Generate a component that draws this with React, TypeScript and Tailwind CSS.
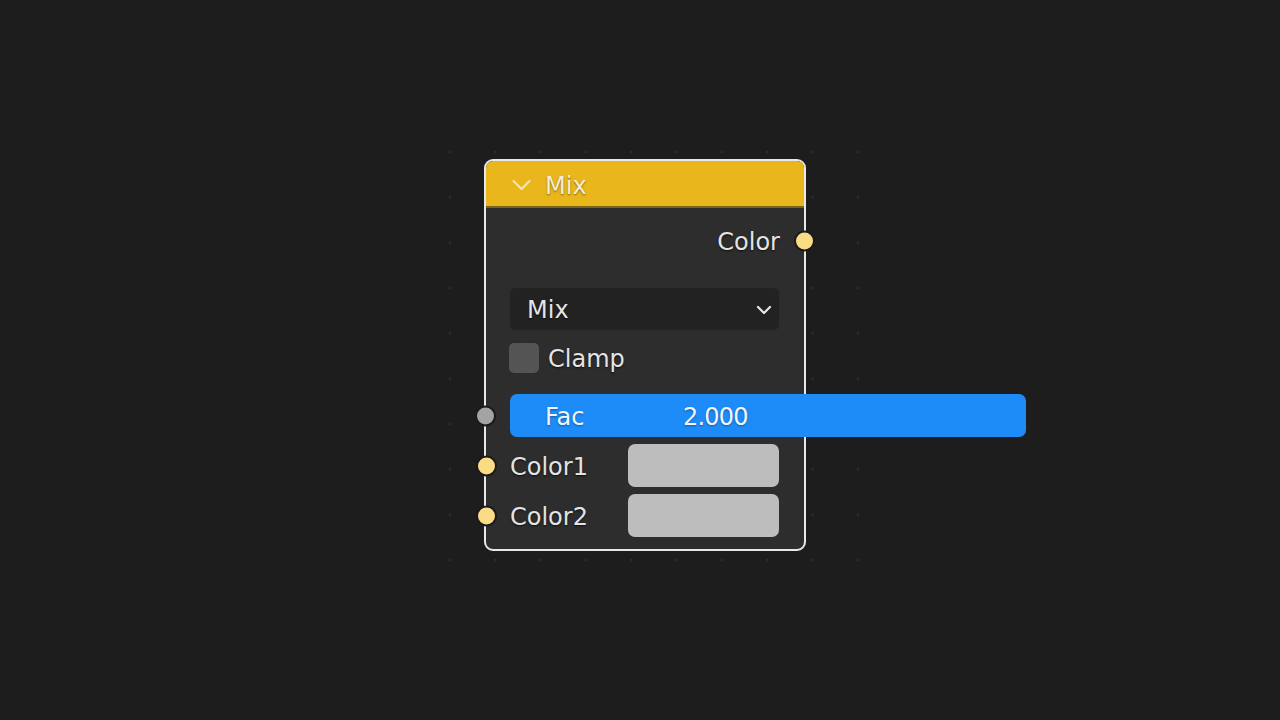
import React from "react";

const font = { fontFamily: '"DejaVu Sans", "Noto Sans", sans-serif' };

function Socket({ color, className }: { color: string; className: string }) {
  return (
    <div
      className={`absolute top-1/2 -translate-y-1/2 h-[21px] w-[21px] rounded-full border-[2px] border-[#1a1a1a] ${className}`}
      style={{ backgroundColor: color }}
    />
  );
}

function DotGrid() {
  const step = 408 / 9;
  const dots: React.ReactNode[] = [];
  for (let i = 0; i < 10; i++) {
    for (let j = 0; j < 10; j++) {
      dots.push(
        <circle key={`${i}-${j}`} cx={450 + i * step} cy={152 + j * step} r={1.5} fill="#2c2c2c" />
      );
    }
  }
  return (
    <svg className="absolute left-0 top-0" width={1280} height={720}>
      {dots}
    </svg>
  );
}

export default function App() {
  const label =
    "translate-y-[1px] text-[24px] leading-none text-[#e4e4e4] [text-shadow:0_1px_2px_rgba(0,0,0,0.7)]";
  const sliderText =
    "translate-y-[1px] text-[24px] leading-none text-[#f2f6fb] [text-shadow:0_1px_2px_rgba(0,0,0,0.35)]";
  return (
    <div className="relative h-[720px] w-[1280px] overflow-hidden bg-[#1d1d1d]" style={font}>
      <DotGrid />

      {/* Mix node */}
      <div className="absolute left-[484px] top-[159px] w-[322px] rounded-[9px] border-2 border-[#e8e8e8] bg-[#2d2d2d]">
        {/* header */}
        <div className="flex h-[47px] items-center gap-[14px] rounded-t-[7px] border-b-[2px] border-[#7a6216] bg-[#e9b71b] pl-[26px]">
          <svg width="19" height="12" viewBox="0 0 19 12" className="mt-[2px]">
            <path d="M1.5 2 L9.5 10 L17.5 2" fill="none" stroke="#f3e6bf" strokeWidth="2" strokeLinecap="round" strokeLinejoin="round" />
          </svg>
          <span className="translate-y-[2px] text-[24px] leading-none text-[#f4ecd6] [text-shadow:0_1px_2px_rgba(0,0,0,0.45)]">
            Mix
          </span>
        </div>

        {/* body */}
        <div className="flex flex-col pb-[12px] pl-[23px] pr-[24px] pt-[11px]">
          {/* output socket row */}
          <div className="relative flex h-[44px] items-center justify-end">
            <span className={label}>Color</span>
            <Socket color="#fbdc86" className="-right-[35px]" />
          </div>

          {/* blend mode dropdown */}
          <div className="mt-[24px] flex h-[44px] items-center justify-between rounded-[7px] border border-[#2c2c2c] bg-[#222222] pl-[17px] pr-[7px]">
            <span className={label}>Mix</span>
            <svg width="16" height="10" viewBox="0 0 16 10" className="translate-y-[1px]">
              <path d="M2 2 L8 8 L14 2" fill="none" stroke="#e8e8e8" strokeWidth="2.2" strokeLinecap="round" strokeLinejoin="round" />
            </svg>
          </div>

          {/* clamp checkbox */}
          <div className="mt-[12px] flex h-[30px] items-center gap-[9px]">
            <div className="h-[30px] w-[30px] rounded-[5px] bg-[#545454]" />
            <span className={label}>Clamp</span>
          </div>

          {/* factor slider (being edited, wider than the node) */}
          <div className="relative mt-[21px] h-[43px]">
            <Socket color="#a3a3a3" className="-left-[34px]" />
            <div className="ml-px flex h-[43px] w-[516px] items-center rounded-[7px] bg-[#1d8bf8] pl-[35px]">
              <span className={`${sliderText} w-[138px]`}>Fac</span>
              <span className={`${sliderText} tracking-[-0.8px]`}>2.000</span>
            </div>
          </div>

          {/* color inputs */}
          {["Color1", "Color2"].map((name) => (
            <div key={name} className="relative mt-[7px] flex h-[43px] items-center justify-between">
              <Socket color="#fbdc86" className="-left-[33px]" />
              <span className={`${label} pl-px`}>{name}</span>
              <div className="mr-px h-[43px] w-[151px] rounded-[7px] bg-[#bdbdbd]" />
            </div>
          ))}
        </div>
      </div>
    </div>
  );
}
